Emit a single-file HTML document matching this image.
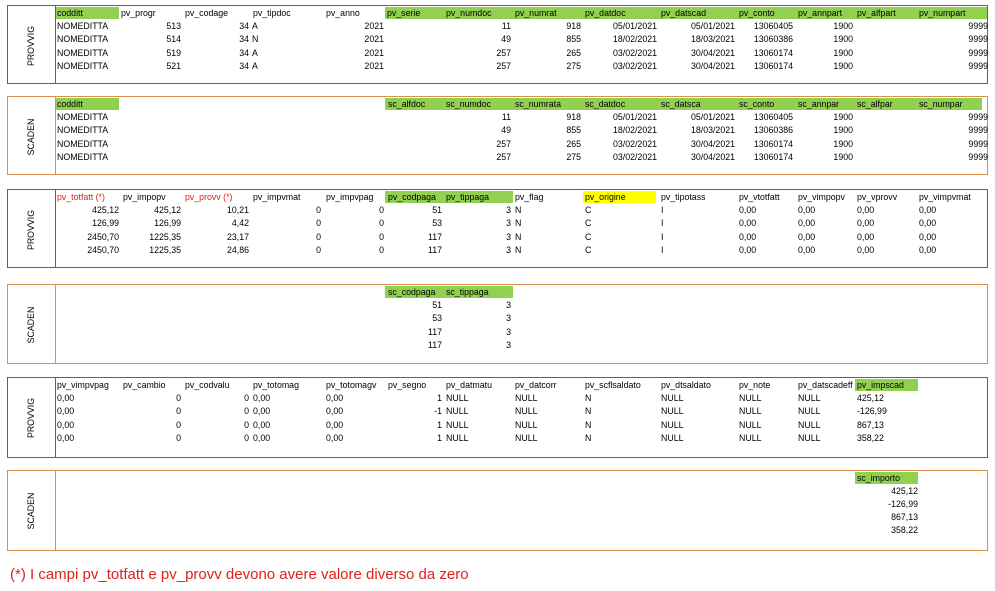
<!DOCTYPE html>
<html><head><meta charset="utf-8"><style>
body{margin:0;width:995px;height:591px;background:#fff;position:relative;font-family:"Liberation Sans",sans-serif;font-size:8.8px;color:#000;overflow:hidden}
.b{position:absolute;left:7px;width:981px;height:79px;box-sizing:border-box}
.bl{border:1px solid #44679a}.or{border:1px solid #d9904e}
.b:before{content:"";position:absolute;left:47px;top:0;bottom:0;border-left:1px solid currentColor}
.bl{color:#44679a}.or{color:#d9904e}
.lab{position:absolute;left:23px;top:40px;transform:translate(-50%,-50%) rotate(-90deg);color:#000;font-size:8.8px;white-space:nowrap}
.b i{position:absolute;font-style:normal;white-space:nowrap;color:#000;line-height:11px}
.b i.r{transform:translateX(-100%)}
.g{position:absolute;background:#92d050;height:12px;top:1px}
.y{position:absolute;background:#ffff00;height:12px;top:1px}
.red{color:#e0201a!important}
.note{position:absolute;left:10px;top:566px;font-size:15px;color:#e0201a}
</style></head><body>

<div class="b bl" style="top:5px">
<span class="lab">PROVVIG</span>
<div class="g" style="left:48px;width:63px"></div><div class="g" style="left:377px;width:602px"></div>
<i style="left:49px;top:2px">codditt</i><i style="left:113px;top:2px">pv_progr</i><i style="left:177px;top:2px">pv_codage</i><i style="left:245px;top:2px">pv_tipdoc</i><i style="left:318px;top:2px">pv_anno</i><i style="left:379px;top:2px">pv_serie</i><i style="left:438px;top:2px">pv_numdoc</i><i style="left:507px;top:2px">pv_numrat</i><i style="left:577px;top:2px">pv_datdoc</i><i style="left:653px;top:2px">pv_datscad</i><i style="left:731px;top:2px">pv_conto</i><i style="left:790px;top:2px">pv_annpart</i><i style="left:849px;top:2px">pv_alfpart</i><i style="left:911px;top:2px">pv_numpart</i>

<i style="left:49px;top:15px">NOMEDITTA</i><i class="r" style="left:173px;top:15px">513</i><i class="r" style="left:241px;top:15px">34</i><i style="left:244px;top:15px">A</i><i class="r" style="left:376px;top:15px">2021</i><i class="r" style="left:503px;top:15px">11</i><i class="r" style="left:573px;top:15px">918</i><i class="r" style="left:649px;top:15px">05/01/2021</i><i class="r" style="left:727px;top:15px">05/01/2021</i><i class="r" style="left:785px;top:15px">13060405</i><i class="r" style="left:845px;top:15px">1900</i><i class="r" style="left:980px;top:15px">9999</i>
<i style="left:49px;top:28px">NOMEDITTA</i><i class="r" style="left:173px;top:28px">514</i><i class="r" style="left:241px;top:28px">34</i><i style="left:244px;top:28px">N</i><i class="r" style="left:376px;top:28px">2021</i><i class="r" style="left:503px;top:28px">49</i><i class="r" style="left:573px;top:28px">855</i><i class="r" style="left:649px;top:28px">18/02/2021</i><i class="r" style="left:727px;top:28px">18/03/2021</i><i class="r" style="left:785px;top:28px">13060386</i><i class="r" style="left:845px;top:28px">1900</i><i class="r" style="left:980px;top:28px">9999</i>
<i style="left:49px;top:42px">NOMEDITTA</i><i class="r" style="left:173px;top:42px">519</i><i class="r" style="left:241px;top:42px">34</i><i style="left:244px;top:42px">A</i><i class="r" style="left:376px;top:42px">2021</i><i class="r" style="left:503px;top:42px">257</i><i class="r" style="left:573px;top:42px">265</i><i class="r" style="left:649px;top:42px">03/02/2021</i><i class="r" style="left:727px;top:42px">30/04/2021</i><i class="r" style="left:785px;top:42px">13060174</i><i class="r" style="left:845px;top:42px">1900</i><i class="r" style="left:980px;top:42px">9999</i>
<i style="left:49px;top:55px">NOMEDITTA</i><i class="r" style="left:173px;top:55px">521</i><i class="r" style="left:241px;top:55px">34</i><i style="left:244px;top:55px">A</i><i class="r" style="left:376px;top:55px">2021</i><i class="r" style="left:503px;top:55px">257</i><i class="r" style="left:573px;top:55px">275</i><i class="r" style="left:649px;top:55px">03/02/2021</i><i class="r" style="left:727px;top:55px">30/04/2021</i><i class="r" style="left:785px;top:55px">13060174</i><i class="r" style="left:845px;top:55px">1900</i><i class="r" style="left:980px;top:55px">9999</i>
</div>

<div class="b or" style="top:96px">
<span class="lab">SCADEN</span>
<div class="g" style="left:48px;width:63px"></div><div class="g" style="left:377px;width:597px"></div>
<i style="left:49px;top:2px">codditt</i><i style="left:380px;top:2px">sc_alfdoc</i><i style="left:438px;top:2px">sc_numdoc</i><i style="left:507px;top:2px">sc_numrata</i><i style="left:577px;top:2px">sc_datdoc</i><i style="left:653px;top:2px">sc_datsca</i><i style="left:731px;top:2px">sc_conto</i><i style="left:790px;top:2px">sc_annpar</i><i style="left:849px;top:2px">sc_alfpar</i><i style="left:911px;top:2px">sc_numpar</i>
<i style="left:49px;top:15px">NOMEDITTA</i><i class="r" style="left:503px;top:15px">11</i><i class="r" style="left:573px;top:15px">918</i><i class="r" style="left:649px;top:15px">05/01/2021</i><i class="r" style="left:727px;top:15px">05/01/2021</i><i class="r" style="left:785px;top:15px">13060405</i><i class="r" style="left:845px;top:15px">1900</i><i class="r" style="left:980px;top:15px">9999</i>
<i style="left:49px;top:28px">NOMEDITTA</i><i class="r" style="left:503px;top:28px">49</i><i class="r" style="left:573px;top:28px">855</i><i class="r" style="left:649px;top:28px">18/02/2021</i><i class="r" style="left:727px;top:28px">18/03/2021</i><i class="r" style="left:785px;top:28px">13060386</i><i class="r" style="left:845px;top:28px">1900</i><i class="r" style="left:980px;top:28px">9999</i>
<i style="left:49px;top:42px">NOMEDITTA</i><i class="r" style="left:503px;top:42px">257</i><i class="r" style="left:573px;top:42px">265</i><i class="r" style="left:649px;top:42px">03/02/2021</i><i class="r" style="left:727px;top:42px">30/04/2021</i><i class="r" style="left:785px;top:42px">13060174</i><i class="r" style="left:845px;top:42px">1900</i><i class="r" style="left:980px;top:42px">9999</i>
<i style="left:49px;top:55px">NOMEDITTA</i><i class="r" style="left:503px;top:55px">257</i><i class="r" style="left:573px;top:55px">275</i><i class="r" style="left:649px;top:55px">03/02/2021</i><i class="r" style="left:727px;top:55px">30/04/2021</i><i class="r" style="left:785px;top:55px">13060174</i><i class="r" style="left:845px;top:55px">1900</i><i class="r" style="left:980px;top:55px">9999</i>
</div>

<div class="b bl" style="top:189px">
<span class="lab">PROVVIG</span>
<div class="g" style="left:377px;width:128px"></div><div class="y" style="left:575px;width:73px"></div>
<i class="red" style="left:49px;top:2px">pv_totfatt (*)</i><i style="left:115px;top:2px">pv_impopv</i><i class="red" style="left:177px;top:2px">pv_provv (*)</i><i style="left:245px;top:2px">pv_impvmat</i><i style="left:318px;top:2px">pv_impvpag</i><i style="left:380px;top:2px">pv_codpaga</i><i style="left:438px;top:2px">pv_tippaga</i><i style="left:507px;top:2px">pv_flag</i><i style="left:577px;top:2px">pv_origine</i><i style="left:653px;top:2px">pv_tipotass</i><i style="left:731px;top:2px">pv_vtotfatt</i><i style="left:790px;top:2px">pv_vimpopv</i><i style="left:849px;top:2px">pv_vprovv</i><i style="left:911px;top:2px">pv_vimpvmat</i>
<i class="r" style="left:111px;top:15px">425,12</i><i class="r" style="left:173px;top:15px">425,12</i><i class="r" style="left:241px;top:15px">10,21</i><i class="r" style="left:313px;top:15px">0</i><i class="r" style="left:376px;top:15px">0</i><i class="r" style="left:434px;top:15px">51</i><i class="r" style="left:503px;top:15px">3</i><i style="left:507px;top:15px">N</i><i style="left:577px;top:15px">C</i><i style="left:653px;top:15px">I</i><i style="left:731px;top:15px">0,00</i><i style="left:790px;top:15px">0,00</i><i style="left:849px;top:15px">0,00</i><i style="left:911px;top:15px">0,00</i>
<i class="r" style="left:111px;top:28px">126,99</i><i class="r" style="left:173px;top:28px">126,99</i><i class="r" style="left:241px;top:28px">4,42</i><i class="r" style="left:313px;top:28px">0</i><i class="r" style="left:376px;top:28px">0</i><i class="r" style="left:434px;top:28px">53</i><i class="r" style="left:503px;top:28px">3</i><i style="left:507px;top:28px">N</i><i style="left:577px;top:28px">C</i><i style="left:653px;top:28px">I</i><i style="left:731px;top:28px">0,00</i><i style="left:790px;top:28px">0,00</i><i style="left:849px;top:28px">0,00</i><i style="left:911px;top:28px">0,00</i>
<i class="r" style="left:111px;top:42px">2450,70</i><i class="r" style="left:173px;top:42px">1225,35</i><i class="r" style="left:241px;top:42px">23,17</i><i class="r" style="left:313px;top:42px">0</i><i class="r" style="left:376px;top:42px">0</i><i class="r" style="left:434px;top:42px">117</i><i class="r" style="left:503px;top:42px">3</i><i style="left:507px;top:42px">N</i><i style="left:577px;top:42px">C</i><i style="left:653px;top:42px">I</i><i style="left:731px;top:42px">0,00</i><i style="left:790px;top:42px">0,00</i><i style="left:849px;top:42px">0,00</i><i style="left:911px;top:42px">0,00</i>
<i class="r" style="left:111px;top:55px">2450,70</i><i class="r" style="left:173px;top:55px">1225,35</i><i class="r" style="left:241px;top:55px">24,86</i><i class="r" style="left:313px;top:55px">0</i><i class="r" style="left:376px;top:55px">0</i><i class="r" style="left:434px;top:55px">117</i><i class="r" style="left:503px;top:55px">3</i><i style="left:507px;top:55px">N</i><i style="left:577px;top:55px">C</i><i style="left:653px;top:55px">I</i><i style="left:731px;top:55px">0,00</i><i style="left:790px;top:55px">0,00</i><i style="left:849px;top:55px">0,00</i><i style="left:911px;top:55px">0,00</i>
</div>

<div class="b or" style="top:284px;height:80px">
<span class="lab">SCADEN</span>
<div class="g" style="left:377px;width:128px"></div>
<i style="left:380px;top:2px">sc_codpaga</i><i style="left:438px;top:2px">sc_tippaga</i>
<i class="r" style="left:434px;top:15px">51</i><i class="r" style="left:503px;top:15px">3</i>
<i class="r" style="left:434px;top:28px">53</i><i class="r" style="left:503px;top:28px">3</i>
<i class="r" style="left:434px;top:42px">117</i><i class="r" style="left:503px;top:42px">3</i>
<i class="r" style="left:434px;top:55px">117</i><i class="r" style="left:503px;top:55px">3</i>
</div>

<div class="b bl" style="top:377px;height:81px">
<span class="lab">PROVVIG</span>
<div class="g" style="left:847px;width:63px"></div>
<i style="left:49px;top:2px">pv_vimpvpag</i><i style="left:115px;top:2px">pv_cambio</i><i style="left:177px;top:2px">pv_codvalu</i><i style="left:245px;top:2px">pv_totomag</i><i style="left:318px;top:2px">pv_totomagv</i><i style="left:380px;top:2px">pv_segno</i><i style="left:438px;top:2px">pv_datmatu</i><i style="left:507px;top:2px">pv_datcorr</i><i style="left:577px;top:2px">pv_scflsaldato</i><i style="left:653px;top:2px">pv_dtsaldato</i><i style="left:731px;top:2px">pv_note</i><i style="left:790px;top:2px">pv_datscadeff</i><i style="left:849px;top:2px">pv_impscad</i>
<i style="left:49px;top:15px">0,00</i><i class="r" style="left:173px;top:15px">0</i><i class="r" style="left:241px;top:15px">0</i><i style="left:245px;top:15px">0,00</i><i style="left:318px;top:15px">0,00</i><i class="r" style="left:434px;top:15px">1</i><i style="left:438px;top:15px">NULL</i><i style="left:507px;top:15px">NULL</i><i style="left:577px;top:15px">N</i><i style="left:653px;top:15px">NULL</i><i style="left:731px;top:15px">NULL</i><i style="left:790px;top:15px">NULL</i><i style="left:849px;top:15px">425,12</i>
<i style="left:49px;top:28px">0,00</i><i class="r" style="left:173px;top:28px">0</i><i class="r" style="left:241px;top:28px">0</i><i style="left:245px;top:28px">0,00</i><i style="left:318px;top:28px">0,00</i><i class="r" style="left:434px;top:28px">-1</i><i style="left:438px;top:28px">NULL</i><i style="left:507px;top:28px">NULL</i><i style="left:577px;top:28px">N</i><i style="left:653px;top:28px">NULL</i><i style="left:731px;top:28px">NULL</i><i style="left:790px;top:28px">NULL</i><i style="left:849px;top:28px">-126,99</i>
<i style="left:49px;top:42px">0,00</i><i class="r" style="left:173px;top:42px">0</i><i class="r" style="left:241px;top:42px">0</i><i style="left:245px;top:42px">0,00</i><i style="left:318px;top:42px">0,00</i><i class="r" style="left:434px;top:42px">1</i><i style="left:438px;top:42px">NULL</i><i style="left:507px;top:42px">NULL</i><i style="left:577px;top:42px">N</i><i style="left:653px;top:42px">NULL</i><i style="left:731px;top:42px">NULL</i><i style="left:790px;top:42px">NULL</i><i style="left:849px;top:42px">867,13</i>
<i style="left:49px;top:55px">0,00</i><i class="r" style="left:173px;top:55px">0</i><i class="r" style="left:241px;top:55px">0</i><i style="left:245px;top:55px">0,00</i><i style="left:318px;top:55px">0,00</i><i class="r" style="left:434px;top:55px">1</i><i style="left:438px;top:55px">NULL</i><i style="left:507px;top:55px">NULL</i><i style="left:577px;top:55px">N</i><i style="left:653px;top:55px">NULL</i><i style="left:731px;top:55px">NULL</i><i style="left:790px;top:55px">NULL</i><i style="left:849px;top:55px">358,22</i>
</div>

<div class="b or" style="top:470px;height:81px">
<span class="lab">SCADEN</span>
<div class="g" style="left:847px;width:63px"></div>
<i style="left:849px;top:2px">sc_importo</i>
<i class="r" style="left:910px;top:15px">425,12</i>
<i class="r" style="left:910px;top:28px">-126,99</i>
<i class="r" style="left:910px;top:41px">867,13</i>
<i class="r" style="left:910px;top:54px">358,22</i>
</div>

<div class="note">(*) I campi pv_totfatt e pv_provv devono avere valore diverso da zero</div>
</body></html>
